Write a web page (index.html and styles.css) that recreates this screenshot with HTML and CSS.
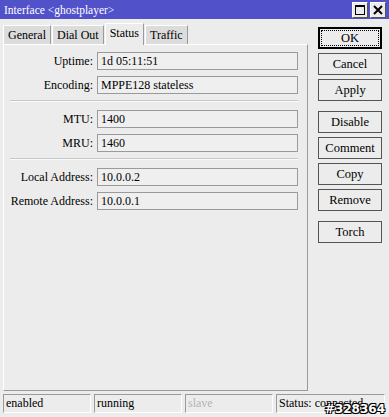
FILE: index.html
```html
<html>
    <head>
        <link rel="stylesheet" href="styles.css">
    </head>
    <body>
        <div class="window">
            <div class="titlebar">
                <span class="title">Interface &lt;ghostplayer&gt;</span>
                <div class="winbtns">
                    <span class="winbtn"><svg width="10" height="10" viewBox="0 0 10 10"><rect x="0.5" y="0.5" width="9" height="9" fill="none" stroke="#000"/><rect x="0" y="0" width="10" height="2" fill="#000"/></svg></span>
                    <span class="winbtn"><svg width="10" height="10" viewBox="0 0 10 10"><path d="M1 1 L9 9 M9 1 L1 9" stroke="#000" stroke-width="2"/></svg></span>
                </div>
            </div>

            <main>
                <section class="left">
                    <nav class="tabs">
                        <span class="tab">General</span>
                        <span class="tab">Dial Out</span>
                        <span class="tab active">Status</span>
                        <span class="tab">Traffic</span>
                    </nav>
                    <div class="panel">
                        <div class="row"><label>Uptime:</label><div class="field">1d 05:11:51</div></div>
                        <div class="row"><label>Encoding:</label><div class="field">MPPE128 stateless</div></div>
                        <hr>
                        <div class="row"><label>MTU:</label><div class="field">1400</div></div>
                        <div class="row"><label>MRU:</label><div class="field">1460</div></div>
                        <hr>
                        <div class="row"><label>Local Address:</label><div class="field">10.0.0.2</div></div>
                        <div class="row"><label>Remote Address:</label><div class="field">10.0.0.1</div></div>
                    </div>
                </section>

                <aside class="buttons">
                    <button class="default"><span>OK</span></button>
                    <button>Cancel</button>
                    <button>Apply</button>
                    <button class="gap">Disable</button>
                    <button>Comment</button>
                    <button>Copy</button>
                    <button>Remove</button>
                    <button class="gap">Torch</button>
                </aside>
            </main>

            <footer class="statusbar">
                <span class="cell c1">enabled</span>
                <span class="cell c2">running</span>
                <span class="cell c3 dim">slave</span>
                <span class="cell c4">Status: connected</span>
            </footer>
            <div class="watermark">#328364</div>
        </div>
    </body>
</html>
```

FILE: styles.css
```css
body {
    margin: 0;
    font: 12px "Liberation Serif", serif;
    color: #000;
}

.window {
    position: relative;
    width: 389px;
    height: 417px;
    background-color: #ececec;
    display: flex;
    flex-direction: column;
}

.titlebar {
    height: 19px;
    background-color: #5151c9;
    display: flex;
    align-items: center;
    justify-content: space-between;
    padding: 0 3px 0 4px;
}
.title {
    color: #fff;
    font-size: 11.5px;
}
.winbtns {
    display: flex;
    gap: 2px;
}
.winbtn {
    width: 14px;
    height: 14px;
    background-color: #ececec;
    border: 1px solid #fff;
    border-right-color: #555;
    border-bottom-color: #555;
    display: flex;
    align-items: center;
    justify-content: center;
}

main {
    display: flex;
    flex: 1;
}

.left {
    padding: 4px 0 0 3px;
    width: 305px;
    display: flex;
    flex-direction: column;
}

.tabs {
    display: flex;
    height: 21px;
    align-items: flex-end;
}
.tab {
    height: 18px;
    padding: 0 4px;
    line-height: 18px;
    background-color: #dcdcdc;
    border: 1px solid #fff;
    border-right-color: #9a9a9a;
    border-bottom: none;
    margin-right: 1px;
    font-size: 12px;
}
.tab.active {
    height: 21px;
    line-height: 19px;
    background-color: #ececec;
    position: relative;
    top: 1px;
}

.panel {
    height: 347px;
    border: 1px solid #fff;
    border-right-color: #9a9a9a;
    border-bottom-color: #9a9a9a;
    padding: 7px 9px 0 0;
    box-sizing: border-box;
}

.row {
    display: flex;
    align-items: center;
    margin-bottom: 6px;
}
.row label {
    width: 89px;
    text-align: right;
    padding-right: 4px;
}
.field {
    flex: 1;
    height: 16px;
    line-height: 16px;
    padding-left: 3px;
    background-color: #efefef;
    border: 1px solid #9a9a9a;
}

hr {
    border: none;
    border-top: 1px solid #c8c8c8;
    border-bottom: 1px solid #fafafa;
    margin: 2px 0 8px 6px;
}

.buttons {
    display: flex;
    flex-direction: column;
    gap: 4px;
    padding: 8px 0 0 10px;
}
button {
    width: 64px;
    height: 22px;
    font: 12.5px "Liberation Serif", serif;
    background-color: #ececec;
    border: 1px solid #555;
    padding: 0;
    color: #000;
}
button.default {
    border: 2px solid #000;
}
button.default span {
    display: block;
    border: 1px dotted #000;
    margin: 1px;
    line-height: 14px;
}
button.gap {
    margin-top: 6px;
}

.statusbar {
    height: 21px;
    display: flex;
    gap: 3px;
    padding: 0 4px 2px 3px;
}
.cell {
    height: 17px;
    line-height: 17px;
    padding-left: 2px;
    border: 1px solid #9a9a9a;
    border-right-color: #fff;
    border-bottom-color: #fff;
}
.c1, .c2, .c3 {
    width: 84px;
}
.c4 {
    flex: 1;
}
.dim {
    color: #b4b4b4;
}

.watermark {
    position: absolute;
    right: 4px;
    bottom: 1px;
    font: bold 12px "DejaVu Sans", sans-serif;
    color: #fff;
    text-shadow: -1px -1px 0 #000, 1px -1px 0 #000, -1px 1px 0 #000, 1px 1px 0 #000;
}
```
